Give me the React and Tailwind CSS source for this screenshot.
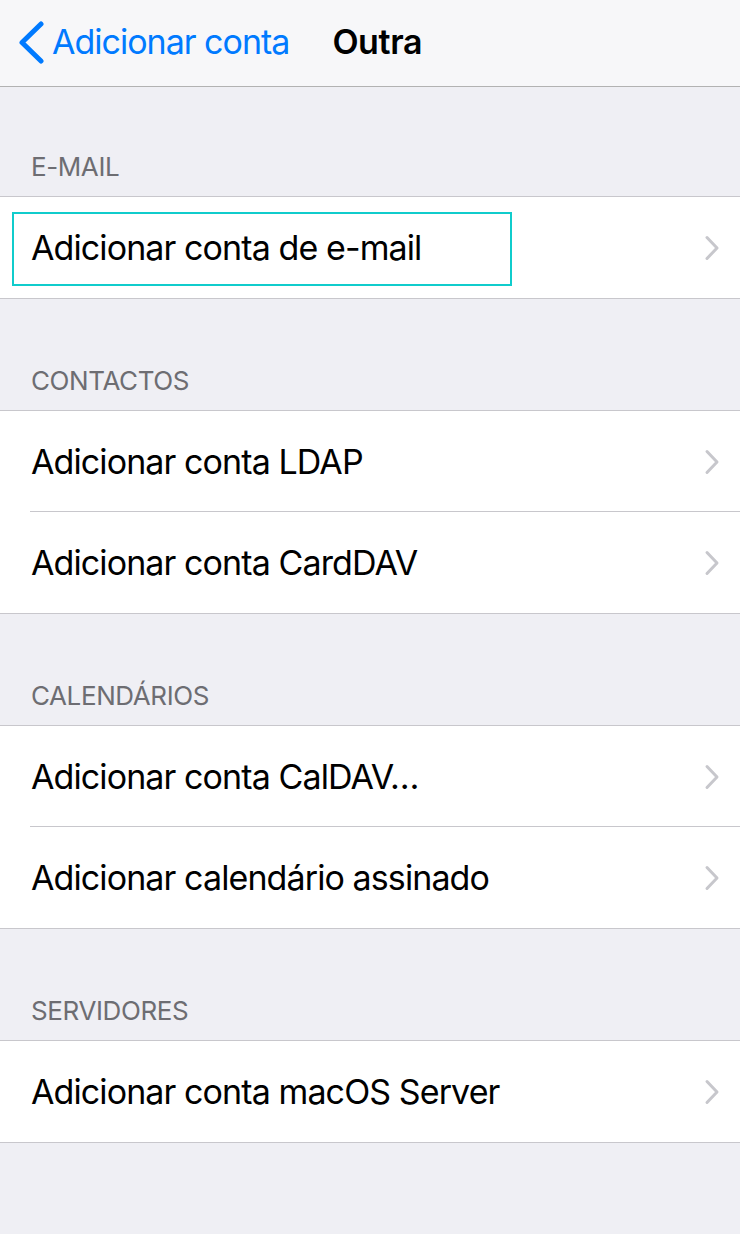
import React from 'react';

const sections = [
  { title: 'E-MAIL', rows: ['Adicionar conta de e-mail'] },
  { title: 'CONTACTOS', rows: ['Adicionar conta LDAP', 'Adicionar conta CardDAV'] },
  { title: 'CALENDÁRIOS', rows: ['Adicionar conta CalDAV…', 'Adicionar calendário assinado'] },
  { title: 'SERVIDORES', rows: ['Adicionar conta macOS Server'] },
];

const Chevron = () => (
  <svg width="16" height="26" viewBox="0 0 16 26" className="shrink-0">
    <path d="M3 2.5 L13 13 L3 23.5" fill="none" stroke="#c7c7cc" strokeWidth="3" strokeLinecap="round" strokeLinejoin="round" />
  </svg>
);

const Row = ({ label, last, highlight }) => (
  <div className="relative flex h-[101px] items-center pl-[31px] pr-[20px]">
    {highlight && (
      <div className="absolute left-[12px] top-[15px] h-[74px] w-[500px] border-[2.5px] border-[#10cccc]" />
    )}
    <span className="flex-1 text-[34px] tracking-[-0.9px] text-black">{label}</span>
    <Chevron />
    {!last && <div className="absolute bottom-0 left-[30px] right-0 h-px bg-[#c8c7cc]" />}
  </div>
);

export default function App() {
  return (
    <div className="min-h-[1234px] w-[740px] bg-[#efeff4]" style={{ fontFamily: 'Inter, "Noto Sans", sans-serif' }}>
      <div className="flex h-[87px] items-center border-b border-[#b2b2b2] bg-[#f7f7f9]">
        <svg width="30" height="44" viewBox="0 0 30 44" className="ml-[16px]">
          <path d="M25 3 L6 21.5 L25 40" fill="none" stroke="#007aff" strokeWidth="5" strokeLinecap="round" strokeLinejoin="round" />
        </svg>
        <span className="-mt-[3px] ml-[6px] text-[34px] tracking-[-1px] text-[#007aff]">Adicionar conta</span>
        <span className="-mt-[3px] ml-[43px] text-[34px] font-semibold tracking-[-0.4px] text-black">Outra</span>
      </div>
      {sections.map((s, si) => (
        <div key={s.title}>
          <div className={`flex items-end pb-[13px] pl-[31px] ${si === 0 ? 'h-[109px]' : 'h-[111px]'}`}>
            <span className="text-[26px] leading-[32px] tracking-[-0.4px] text-[#6d6d72]">{s.title}</span>
          </div>
          <div className="border-y border-[#c8c7cc] bg-white">
            {s.rows.map((r, ri) => (
              <Row key={r} label={r} last={ri === s.rows.length - 1} highlight={si === 0} />
            ))}
          </div>
        </div>
      ))}
    </div>
  );
}
